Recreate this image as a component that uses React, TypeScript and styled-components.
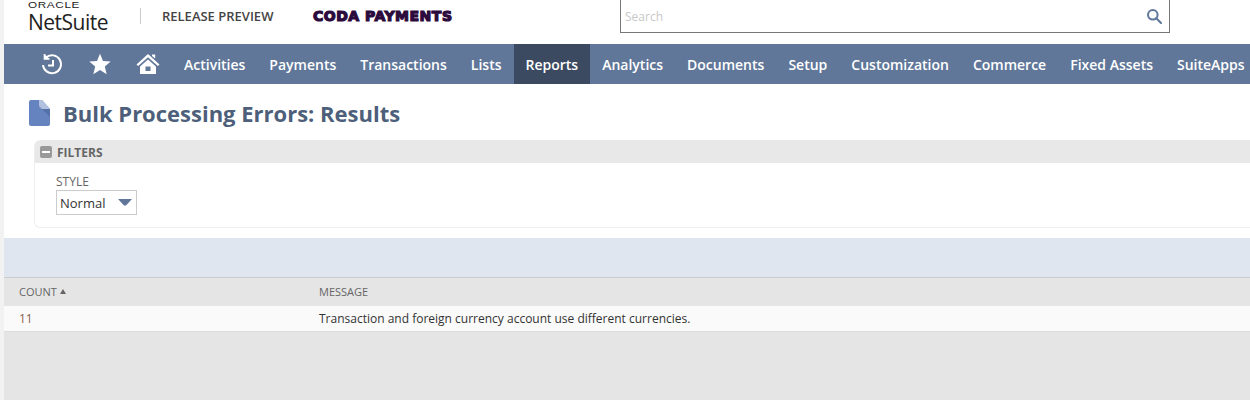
import React from "react";
import styled, { createGlobalStyle } from "styled-components";

const Global = createGlobalStyle`
  html, body { margin: 0; padding: 0; background: #fff; }
  body { font-family: "Open Sans", "Liberation Sans", sans-serif; overflow: hidden; }
`;
const Page = styled.div`
  width: 1250px; height: 400px; overflow: hidden; display: flex; flex-direction: column;
  box-sizing: border-box; border-left: 4px solid #f2f2f2; background: #fff;
`;
const Header = styled.header`
  height: 44px; flex: none; display: flex; align-items: flex-start; background: #fff;
`;
const Logo = styled.div`
  width: 108px; flex: none; margin-left: 24px; padding-top: 1px; display: flex; flex-direction: column; color: #222;
`;
const Oracle = styled.span`
  font: 400 9px/9px "Liberation Sans", sans-serif; letter-spacing: .5px; transform: scaleX(1.3); transform-origin: left; margin-bottom: 2px;
`;
const Net = styled.span`
  font: 400 21px/20px "Open Sans", sans-serif; letter-spacing: -.5px;
`;
const Divider = styled.div`
  width: 1px; height: 16px; flex: none; background: #ccc; margin: 8px 21px 0 4px;
`;
const Release = styled.div`
  font: 600 13px/16px "Open Sans", sans-serif; color: #444; width: 151px; flex: none; padding-top: 8px; white-space: nowrap;
`;
const Company = styled.div`
  font: 700 14px/16px "DejaVu Sans", sans-serif; color: #2c0a3d; width: 307px; flex: none; padding-top: 8px;
  -webkit-text-stroke: 1.2px #2c0a3d; white-space: nowrap; letter-spacing: .5px;
`;
const Search = styled.div`
  width: 550px; height: 33px; flex: none; box-sizing: border-box; border: 1px solid #777; border-top: 0;
  display: flex; align-items: center; justify-content: space-between; padding: 0 7px 0 4px;
  color: #c8c8c8; font-size: 12px;
`;
const Nav = styled.nav`
  height: 40px; flex: none; background: #607799; display: flex; align-items: stretch; padding-left: 24px; white-space: nowrap;
`;
const IconSlot = styled.div`
  width: 48px; flex: none; display: flex; align-items: center; justify-content: center;
`;
const NavItem = styled.div<{ $active?: boolean }>`
  padding: 0 12px; flex: none; display: flex; align-items: center; color: #fff;
  font-size: 14px; font-weight: 600; background: ${p => (p.$active ? "#3b4a60" : "transparent")};
`;
const TitleRow = styled.div`
  height: 56px; padding: 2px 0 0 25px; box-sizing: border-box; flex: none; display: flex; align-items: center; gap: 13px;
`;
const Title = styled.h1`
  margin: 0; font-size: 22px; font-weight: 700; color: #4d5f7a; line-height: 30px;
`;
const FilterBox = styled.section`
  flex: none; height: 88px; box-sizing: border-box; margin-left: 30px; border: 1px solid #eee; border-top: 0; border-right: 0;
  border-radius: 6px 0 0 6px; display: flex; flex-direction: column;
`;
const FilterHead = styled.div`
  height: 23px; box-sizing: border-box; padding: 1px 0 0 5px; flex: none; background: #e8e8e8; border-radius: 6px 0 0 0;
  display: flex; align-items: center; gap: 5px;
  font-size: 12px; font-weight: 700; color: #666;
`;
const Minus = styled.span`
  width: 12px; height: 12px; border-radius: 2px; background: #999; display: flex; align-items: center; justify-content: center;
  &::after { content: ""; width: 8px; height: 2px; background: #fff; }
`;
const Field = styled.div`
  padding: 11px 0 0 21px; display: flex; flex-direction: column;
`;
const Label = styled.label`
  font-size: 12px; line-height: 16px; color: #666;
`;
const Select = styled.div`
  width: 81px; height: 25px; box-sizing: border-box; border: 1px solid #ccc; display: flex; align-items: center;
  justify-content: space-between; padding: 0 4px 0 3px; font-size: 13px; color: #333;
`;
const Band = styled.div`
  height: 39px; flex: none; margin-top: 10px; background: #dfe6f0; border-bottom: 1px solid #ccc;
`;
const Rows = styled.div`
  flex: 1; background: #e5e5e5; display: flex; flex-direction: column;
`;
const Row = styled.div<{ $head?: boolean }>`
  display: grid; grid-template-columns: 300px 1fr; align-items: center; padding: ${p => (p.$head ? "0 0 2px 15px" : "0 0 0 15px")};
  height: ${p => (p.$head ? "28px" : "26px")};
  box-sizing: border-box; font-size: ${p => (p.$head ? "11px" : "12px")};
  color: ${p => (p.$head ? "#666" : "#333")};
  background: ${p => (p.$head ? "#e5e5e5" : "#fafafa")};
  border-bottom: ${p => (p.$head ? "0" : "1px solid #ddd")};
`;
const HeadCell = styled.span`
  display: flex; align-items: center; gap: 3px;
`;
const Count = styled.span`
  color: #8b5e4b; font-size: 12px;
`;

const items = ["Activities","Payments","Transactions","Lists","Reports","Analytics","Documents","Setup","Customization","Commerce","Fixed Assets","SuiteApps"];

export default function App() {
  return (
    <Page>
      <Global />
      <Header>
        <Logo><Oracle>ORACLE</Oracle><Net>NetSuite</Net></Logo>
        <Divider />
        <Release>RELEASE PREVIEW</Release>
        <Company>CODA PAYMENTS</Company>
        <Search>
          <span>Search</span>
          <svg width="16" height="16" viewBox="0 0 16 16" fill="none" stroke="#607799" strokeWidth="2"><circle cx="6.8" cy="6.8" r="4.8"/><path d="M10.3 10.3 15 15" strokeLinecap="round"/></svg>
        </Search>
      </Header>
      <Nav>
        <IconSlot>
          <svg width="24" height="24" viewBox="0 0 24 24" fill="none" stroke="#fff" strokeWidth="2"><path d="M6 5.5A9 9 0 1 1 3 13"/><path d="M4.5 2v5h5" strokeWidth="1.6" fill="#fff"/><path d="M13 8v5.5H8"/></svg>
        </IconSlot>
        <IconSlot>
          <svg width="24" height="24" viewBox="0 0 24 24" fill="#fff"><path d="M12 1.8l3 7.2 7.7.6-5.9 5 1.9 7.6L12 18.1l-6.7 4.1 1.9-7.6-5.9-5L9 9z"/></svg>
        </IconSlot>
        <IconSlot>
          <svg width="24" height="24" viewBox="0 0 24 24" fill="#fff"><path d="M16 2.5h3.2v4L16 4z"/><path d="M12 2 .5 12.5l1.6 1.6L12 5.2l9.9 8.9 1.6-1.6z"/><path fillRule="evenodd" d="M12 7.5l-8 7V22h16v-7.5zM9.5 14.5h5V19h-5z"/></svg>
        </IconSlot>
        {items.map(i => <NavItem key={i} $active={i === "Reports"}>{i}</NavItem>)}
      </Nav>
      <TitleRow>
        <svg width="21" height="26" viewBox="0 0 21 26"><path d="M2 0h11l8 9v15a2 2 0 0 1-2 2H2a2 2 0 0 1-2-2V2a2 2 0 0 1 2-2z" fill="#6583bf"/><path d="M10 0h3l8 9h-8a3 3 0 0 1-3-3z" fill="#b3c1e0"/><path d="M10 6l11 11V9h-8a3 3 0 0 1-3-3z" fill="#4e6a9e" opacity=".7"/></svg>
        <Title>Bulk Processing Errors: Results</Title>
      </TitleRow>
      <FilterBox>
        <FilterHead><Minus />FILTERS</FilterHead>
        <Field>
          <Label>STYLE</Label>
          <Select>
            <span>Normal</span>
            <svg width="14" height="7" viewBox="0 0 14 7"><path d="M0 0h14L8 6.5H6z" fill="#607799"/></svg>
          </Select>
        </Field>
      </FilterBox>
      <Band />
      <Rows>
        <Row $head>
          <HeadCell>COUNT<svg width="6" height="5" viewBox="0 0 6 5"><path d="M3 0l3 5H0z" fill="#666"/></svg></HeadCell>
          <span>MESSAGE</span>
        </Row>
        <Row><Count>11</Count><span>Transaction and foreign currency account use different currencies.</span></Row>
      </Rows>
    </Page>
  );
}
